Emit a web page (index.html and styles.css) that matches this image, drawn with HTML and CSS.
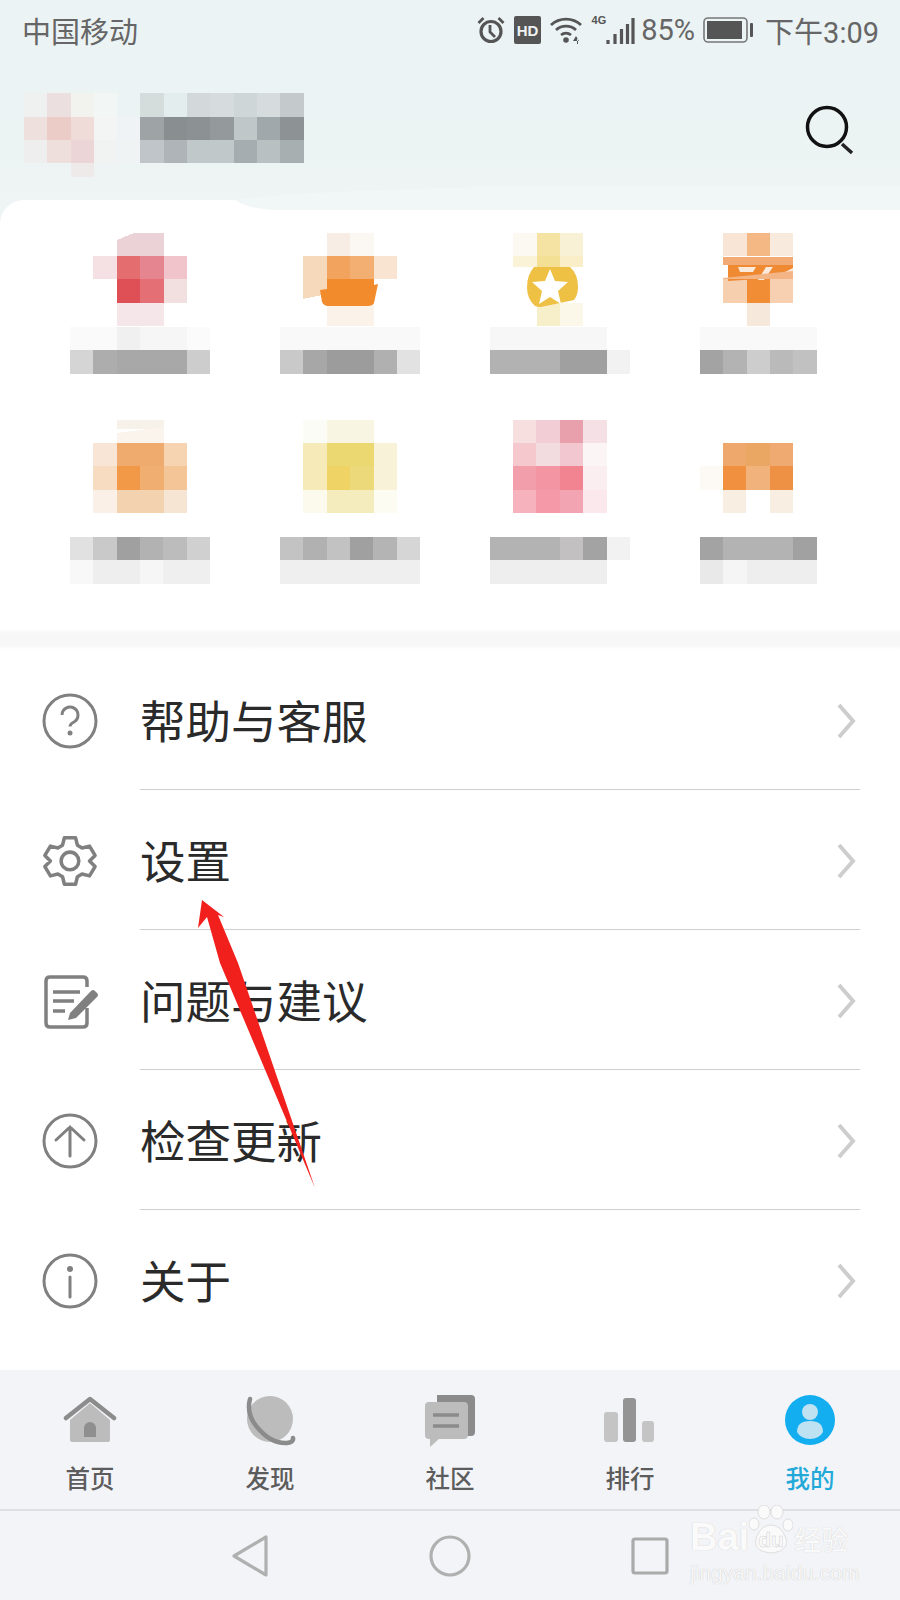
FILE: index.html
```html
<!DOCTYPE html>
<html lang="zh-CN">
<head>
<meta charset="utf-8">
<title>我的</title>
<link rel="stylesheet" href="styles.css">
</head>
<body>
<div class="phone">

  <div class="hero">
    <div class="status">
      <span class="carrier">中国移动</span>
      <div class="status-right">
        <svg class="ic-alarm" width="28" height="30" viewBox="0 0 28 30"><circle cx="14" cy="16.500" r="10" fill="none" stroke="#555" stroke-width="3.200"/><path d="M13 10v7l5 5" fill="none" stroke="#555" stroke-width="2.800"/><path d="M1.500 8l5-5M26.500 8l-5-5" stroke="#555" stroke-width="2.800"/></svg>
        <svg class="ic-hd" width="27" height="28" viewBox="0 0 27 28"><rect width="27" height="28" rx="2" fill="#555"/><text x="13.500" y="19.500" text-anchor="middle" class="hd-text">HD</text></svg>
        <svg class="ic-wifi" width="33" height="28" viewBox="0 0 33 28"><path d="M1 9a22 22 0 0 1 30 0M6 14a15 15 0 0 1 20 0M11 19a8 8 0 0 1 10 0" fill="none" stroke="#555" stroke-width="2.800"/><circle cx="16" cy="24" r="2.800" fill="#555"/><path d="M26 20l-3 5h6zM27 22h1v6h-1z" fill="#555"/></svg>
        <div class="signal">
          <span class="net">4G</span>
          <svg width="29" height="28" viewBox="0 0 29 28"><path d="M2 23v4M9 17v10M15.500 12v15M21.500 7v20M27 1v26" stroke="#555" stroke-width="3.200"/></svg>
        </div>
        <span class="pct">85%</span>
        <svg class="ic-batt" width="50" height="26" viewBox="0 0 50 26"><rect x="1" y="1" width="43" height="24" rx="4" fill="none" stroke="#777" stroke-width="1.600"/><rect x="4" y="4" width="35" height="18" fill="#555"/><rect x="47" y="6" width="3" height="14" rx="1" fill="#555"/></svg>
        <span class="clock">下午3:09</span>
      </div>
    </div>
    <div class="head-row">
      <svg class="head-mosaic" width="282" height="84" viewBox="0 0 282 84" shape-rendering="crispEdges">
        <rect x="0" y="0" width="23" height="24" fill="#eef1f0"/><rect x="23" y="0" width="24" height="24" fill="#ecdfdf"/><rect x="47" y="0" width="23" height="24" fill="#f2f2ef"/><rect x="70" y="0" width="23" height="24" fill="#f2f6f5"/>
        <rect x="0" y="24" width="23" height="23" fill="#eee0dd"/><rect x="23" y="24" width="24" height="23" fill="#ecccc7"/><rect x="47" y="24" width="23" height="23" fill="#efdcd9"/><rect x="70" y="24" width="23" height="23" fill="#f2f5f4"/><rect x="93" y="24" width="23" height="23" fill="#f0f3f5"/>
        <rect x="0" y="47" width="23" height="23" fill="#edeeed"/><rect x="23" y="47" width="24" height="23" fill="#eedfdd"/><rect x="47" y="47" width="23" height="23" fill="#ecd5d7"/><rect x="70" y="47" width="23" height="23" fill="#f0f3f1"/><rect x="93" y="47" width="23" height="23" fill="#eff3f4"/>
        <rect x="47" y="70" width="23" height="14" fill="#eeeaea"/>
        <rect x="116" y="0" width="24" height="24" fill="#d4dcdc"/><rect x="140" y="0" width="23" height="24" fill="#e4eded"/><rect x="163" y="0" width="23" height="24" fill="#d3d9da"/><rect x="186" y="0" width="24" height="24" fill="#d6dcdd"/><rect x="210" y="0" width="23" height="24" fill="#cfd6d7"/><rect x="233" y="0" width="23" height="24" fill="#d6dcdd"/><rect x="256" y="0" width="24" height="24" fill="#c4cacb"/>
        <rect x="116" y="24" width="24" height="23" fill="#9ea4a6"/><rect x="140" y="24" width="23" height="23" fill="#898e91"/><rect x="163" y="24" width="23" height="23" fill="#8c9194"/><rect x="186" y="24" width="24" height="23" fill="#94999b"/><rect x="210" y="24" width="23" height="23" fill="#c0c7c9"/><rect x="233" y="24" width="23" height="23" fill="#a1a8ab"/><rect x="256" y="24" width="24" height="23" fill="#8d9295"/>
        <rect x="116" y="47" width="24" height="23" fill="#bfc5c8"/><rect x="140" y="47" width="23" height="23" fill="#aeb4b7"/><rect x="163" y="47" width="23" height="23" fill="#c1c8ca"/><rect x="186" y="47" width="24" height="23" fill="#c1c8ca"/><rect x="210" y="47" width="23" height="23" fill="#a5adb0"/><rect x="233" y="47" width="23" height="23" fill="#b9c0c2"/><rect x="256" y="47" width="24" height="23" fill="#a8afb1"/>
      </svg>
      <svg class="ic-search" width="50" height="50" viewBox="0 0 50 50"><circle cx="22" cy="22" r="19.500" fill="none" stroke="#111" stroke-width="3.500"/><path d="M37 39l10 9" stroke="#222" stroke-width="3.500"/></svg>
    </div>
  </div>

  <div class="apps">
    <svg class="mosaic" viewBox="0 0 140 94" shape-rendering="crispEdges">
      <path d="M47 7l17-7h30v23H47z" fill="#ebd2d6"/>
      <rect x="23" y="23" width="24" height="23" fill="#f5e0e3"/><rect x="47" y="23" width="23" height="23" fill="#e46d70"/><rect x="70" y="23" width="24" height="23" fill="#e5858f"/><rect x="94" y="23" width="23" height="23" fill="#f0c4ca"/>
      <rect x="47" y="46" width="23" height="24" fill="#de5055"/><rect x="70" y="46" width="24" height="24" fill="#e46f74"/><rect x="94" y="46" width="23" height="24" fill="#f2dfe0"/>
      <rect x="47" y="70" width="47" height="23" fill="#f5e7e9"/>
    </svg>
    <svg class="mosaic" viewBox="0 0 140 94" shape-rendering="crispEdges">
      <rect x="47" y="0" width="23" height="23" fill="#f8ede4"/><rect x="70" y="0" width="24" height="23" fill="#fbf8f3"/>
      <path d="M23 23h24v38l-24 5z" fill="#f6d8bb"/><rect x="47" y="23" width="23" height="23" fill="#f2a45f"/><rect x="70" y="23" width="24" height="23" fill="#f3ae72"/><rect x="94" y="23" width="23" height="23" fill="#f8e4d0"/>
      <rect x="47" y="73" width="47" height="20" fill="#fbf3e9"/>
      <path d="M47 46H94V52l4-1-4 19q-1 3-6 3H48q-4 0-6-4L40 57l7-1z" fill="#f18b2c" shape-rendering="auto"/>
    </svg>
    <svg class="mosaic" viewBox="0 0 140 94" shape-rendering="crispEdges">
      <rect x="23" y="0" width="24" height="23" fill="#fbf9f2"/><rect x="47" y="0" width="23" height="23" fill="#f5e3a4"/><rect x="70" y="0" width="23" height="23" fill="#f9f1d6"/>
      <rect x="23" y="23" width="24" height="11" fill="#fbf3d8"/><rect x="47" y="23" width="23" height="11" fill="#f3e095"/><rect x="70" y="23" width="23" height="11" fill="#f9eec8"/>
      <rect x="47" y="70" width="23" height="23" fill="#f7efc9"/><rect x="70" y="70" width="23" height="23" fill="#fbf8ea"/>
      <g shape-rendering="auto">
        <path d="M44 34h36q8 7 8 20 0 8-4 13l-33 7q-4 0-6-1Q37 66 37 54q0-12 7-20z" fill="#eec044"/>
        <path d="M60 36l5 12 13 1-10 9 3 13-11-7-11 7 3-13-10-9 13-1z" fill="#fff"/>
      </g>
    </svg>
    <svg class="mosaic" viewBox="0 0 140 94" shape-rendering="crispEdges">
      <rect x="23" y="0" width="24" height="23" fill="#f8e5d5"/><rect x="47" y="0" width="23" height="23" fill="#f3b883"/><rect x="70" y="0" width="23" height="23" fill="#f8ebdd"/>
      <rect x="23" y="24" width="70" height="8" fill="#f2ab74"/>
      <rect x="23" y="46" width="24" height="24" fill="#f6cfaf"/><rect x="47" y="46" width="23" height="24" fill="#f18d34"/><rect x="70" y="46" width="23" height="24" fill="#f6d0b0"/>
      <rect x="47" y="70" width="23" height="23" fill="#f6e8da"/>
      <g shape-rendering="auto">
        <path d="M28 32h65v12l-65 4z" fill="#f08a32"/>
        <path d="M38 34h18l-3 5H40zM66 34h7l-9 13h-6zM85 39l8-4v5z" fill="#fbeadb"/>
        <path d="M23 46v-1l70-7v8z" fill="#f3b486"/>
      </g>
    </svg>

    <svg class="lines" viewBox="0 0 140 70" shape-rendering="crispEdges">
      <rect x="0" y="0" width="47" height="23" fill="#fafafa"/><rect x="47" y="0" width="23" height="23" fill="#f0f0f0"/><rect x="70" y="0" width="47" height="23" fill="#f6f6f6"/><rect x="117" y="0" width="23" height="23" fill="#fbfbfb"/>
      <rect x="0" y="23" width="23" height="24" fill="#d5d5d5"/><rect x="23" y="23" width="24" height="24" fill="#adadad"/><rect x="47" y="23" width="70" height="24" fill="#a8a8a8"/><rect x="117" y="23" width="23" height="24" fill="#cdcdcd"/>
    </svg>
    <svg class="lines" viewBox="0 0 140 70" shape-rendering="crispEdges">
      <rect x="0" y="0" width="140" height="23" fill="#f9f9f9"/>
      <rect x="0" y="23" width="23" height="24" fill="#c9c9c9"/><rect x="23" y="23" width="24" height="24" fill="#a7a7a7"/><rect x="47" y="23" width="47" height="24" fill="#9c9c9c"/><rect x="94" y="23" width="23" height="24" fill="#b0b0b0"/><rect x="117" y="23" width="23" height="24" fill="#e2e2e2"/>
    </svg>
    <svg class="lines" viewBox="0 0 140 70" shape-rendering="crispEdges">
      <rect x="0" y="0" width="117" height="23" fill="#f7f7f7"/>
      <rect x="0" y="23" width="70" height="24" fill="#b2b2b2"/><rect x="70" y="23" width="47" height="24" fill="#a0a0a0"/><rect x="117" y="23" width="23" height="24" fill="#f2f2f2"/>
    </svg>
    <svg class="lines" viewBox="0 0 140 70" shape-rendering="crispEdges">
      <rect x="0" y="0" width="117" height="23" fill="#f9f9f9"/>
      <rect x="0" y="23" width="23" height="24" fill="#a3a3a3"/><rect x="23" y="23" width="24" height="24" fill="#b3b3b3"/><rect x="47" y="23" width="23" height="24" fill="#cdcdcd"/><rect x="70" y="23" width="23" height="24" fill="#bababa"/><rect x="93" y="23" width="24" height="24" fill="#c1c1c1"/>
    </svg>

    <svg class="mosaic" viewBox="0 0 140 94" shape-rendering="crispEdges">
      <rect x="47" y="0" width="47" height="9" fill="#f6f2ea"/><path d="M47 13l47-6v16H47z" fill="#fbf4ec"/>
      <rect x="23" y="23" width="24" height="23" fill="#f8e5d6"/><rect x="47" y="23" width="47" height="23" fill="#eeab6d"/><rect x="94" y="23" width="23" height="23" fill="#f6d4b2"/>
      <rect x="23" y="46" width="24" height="24" fill="#f7dcc2"/><rect x="47" y="46" width="23" height="24" fill="#f29947"/><rect x="70" y="46" width="24" height="24" fill="#f0ae70"/><rect x="94" y="46" width="23" height="24" fill="#f3c597"/>
      <rect x="23" y="70" width="24" height="23" fill="#faf0e7"/><rect x="47" y="70" width="47" height="23" fill="#f3d2b0"/><rect x="94" y="70" width="23" height="23" fill="#f6e5d3"/>
    </svg>
    <svg class="mosaic" viewBox="0 0 140 94" shape-rendering="crispEdges">
      <rect x="23" y="0" width="24" height="23" fill="#fcfcf6"/><rect x="47" y="0" width="47" height="23" fill="#f8f6e2"/>
      <rect x="23" y="23" width="24" height="47" fill="#f5eab8"/><rect x="47" y="23" width="47" height="23" fill="#ecd871"/><rect x="94" y="23" width="23" height="47" fill="#f8f3d8"/>
      <rect x="47" y="46" width="23" height="24" fill="#f0d365"/><rect x="70" y="46" width="24" height="24" fill="#ecda7a"/>
      <rect x="23" y="70" width="24" height="23" fill="#fbfaed"/><rect x="47" y="70" width="47" height="23" fill="#f5ecbe"/><rect x="94" y="70" width="23" height="23" fill="#fdfcf3"/>
    </svg>
    <svg class="mosaic" viewBox="0 0 140 94" shape-rendering="crispEdges">
      <rect x="23" y="0" width="23" height="23" fill="#f7dfe0"/><rect x="46" y="0" width="24" height="23" fill="#f2cdd6"/><rect x="70" y="0" width="23" height="23" fill="#e7a0ac"/><rect x="93" y="0" width="24" height="23" fill="#f5e0e6"/>
      <rect x="23" y="23" width="23" height="23" fill="#f5c8ce"/><rect x="46" y="23" width="24" height="23" fill="#f3dce0"/><rect x="70" y="23" width="23" height="23" fill="#f2c7d0"/><rect x="93" y="23" width="24" height="23" fill="#fcf5f5"/>
      <rect x="23" y="46" width="23" height="24" fill="#f29fab"/><rect x="46" y="46" width="24" height="24" fill="#f495a3"/><rect x="70" y="46" width="23" height="24" fill="#f28390"/><rect x="93" y="46" width="24" height="24" fill="#fbeef0"/>
      <rect x="23" y="70" width="23" height="23" fill="#f6b3be"/><rect x="46" y="70" width="24" height="23" fill="#f598a7"/><rect x="70" y="70" width="23" height="23" fill="#f3a4b2"/><rect x="93" y="70" width="24" height="23" fill="#fae8ec"/>
    </svg>
    <svg class="mosaic" viewBox="0 0 140 94" shape-rendering="crispEdges">
      <rect x="23" y="23" width="23" height="23" fill="#eea86c"/><rect x="46" y="23" width="24" height="23" fill="#eaa663"/><rect x="70" y="23" width="23" height="23" fill="#eeaa70"/>
      <rect x="0" y="46" width="23" height="24" fill="#fdfaf6"/><rect x="23" y="46" width="23" height="24" fill="#f19140"/><rect x="46" y="46" width="24" height="24" fill="#f2b27c"/><rect x="70" y="46" width="23" height="24" fill="#ef9145"/>
      <rect x="23" y="70" width="23" height="23" fill="#f9eee2"/><rect x="70" y="70" width="23" height="23" fill="#f9eee2"/>
    </svg>

    <svg class="lines" viewBox="0 -23 140 70" shape-rendering="crispEdges">
      <rect x="0" y="0" width="23" height="23" fill="#e1e1e1"/><rect x="23" y="0" width="24" height="23" fill="#c9c9c9"/><rect x="47" y="0" width="23" height="23" fill="#a0a0a0"/><rect x="70" y="0" width="23" height="23" fill="#b2b2b2"/><rect x="93" y="0" width="24" height="23" fill="#bcbcbc"/><rect x="117" y="0" width="23" height="23" fill="#d0d0d0"/>
      <rect x="0" y="23" width="23" height="24" fill="#f8f8f8"/><rect x="23" y="23" width="47" height="24" fill="#eeeeee"/><rect x="70" y="23" width="23" height="24" fill="#f6f6f6"/><rect x="93" y="23" width="47" height="24" fill="#efefef"/>
    </svg>
    <svg class="lines" viewBox="0 -23 140 70" shape-rendering="crispEdges">
      <rect x="0" y="0" width="23" height="23" fill="#c3c3c3"/><rect x="23" y="0" width="24" height="23" fill="#b1b1b1"/><rect x="47" y="0" width="23" height="23" fill="#c2c2c2"/><rect x="70" y="0" width="23" height="23" fill="#a0a0a0"/><rect x="93" y="0" width="24" height="23" fill="#b4b4b4"/><rect x="117" y="0" width="23" height="23" fill="#d6d6d6"/>
      <rect x="0" y="23" width="140" height="24" fill="#efefef"/>
    </svg>
    <svg class="lines" viewBox="0 -23 140 70" shape-rendering="crispEdges">
      <rect x="0" y="0" width="70" height="23" fill="#b3b3b3"/><rect x="70" y="0" width="23" height="23" fill="#c2c0c1"/><rect x="93" y="0" width="24" height="23" fill="#a3a3a3"/><rect x="117" y="0" width="23" height="23" fill="#f2f2f2"/>
      <rect x="0" y="23" width="117" height="24" fill="#eeeeee"/>
    </svg>
    <svg class="lines" viewBox="0 -23 140 70" shape-rendering="crispEdges">
      <rect x="0" y="0" width="23" height="23" fill="#a3a3a3"/><rect x="23" y="0" width="70" height="23" fill="#b3b3b3"/><rect x="93" y="0" width="24" height="23" fill="#a1a1a1"/>
      <rect x="0" y="23" width="23" height="24" fill="#e9e9e9"/><rect x="23" y="23" width="24" height="24" fill="#f5f5f5"/><rect x="47" y="23" width="70" height="24" fill="#eeeeee"/>
    </svg>
  </div>

  <div class="band"></div>

  <ul class="menu">
    <li class="row">
      <svg class="row-ic" width="58" height="58" viewBox="0 0 58 58"><circle cx="29" cy="29" r="26" fill="none" stroke="#808080" stroke-width="3"/><path d="M21 23a8 8 0 1 1 12 7q-4 2-4 4.500" fill="none" stroke="#808080" stroke-width="3"/><circle cx="29" cy="41" r="2.500" fill="#808080"/></svg>
      <span class="row-label">帮助与客服</span>
      <svg class="chev" width="20" height="38" viewBox="0 0 20 38"><path d="M3 3l14 16L3 35" fill="none" stroke="#cdcdcd" stroke-width="4"/></svg>
    </li>
    <li class="row">
      <svg class="row-ic" width="58" height="58" viewBox="0 0 58 58"><g transform="translate(2 2) scale(.93)"><path d="M23 4h12l2 8 5 3 8-2 6 10-6 6 6 6-6 10-8-2-5 3-2 8H23l-2-8-5-3-8 2-6-10 6-6-6-6 6-10 8 2 5-3z" fill="none" stroke="#808080" stroke-width="3.800" stroke-linejoin="round"/><circle cx="29" cy="29" r="9.500" fill="none" stroke="#808080" stroke-width="3.800"/></g></svg>
      <span class="row-label">设置</span>
      <svg class="chev" width="20" height="38" viewBox="0 0 20 38"><path d="M3 3l14 16L3 35" fill="none" stroke="#cdcdcd" stroke-width="4"/></svg>
    </li>
    <li class="row">
      <svg class="row-ic" width="58" height="58" viewBox="0 0 58 58"><path d="M46 15V9q0-4-4-4H9Q5 5 5 9v42q0 4 4 4h33q4 0 4-4V36" fill="none" stroke="#808080" stroke-width="3.500"/><path d="M12 20h27M12 29h21M12 39h12" stroke="#808080" stroke-width="3.500"/><path d="M27 48l2-7 21-22q2-2 4 0l2 2q2 2 0 4L35 46z" fill="#808080"/></svg>
      <span class="row-label">问题与建议</span>
      <svg class="chev" width="20" height="38" viewBox="0 0 20 38"><path d="M3 3l14 16L3 35" fill="none" stroke="#cdcdcd" stroke-width="4"/></svg>
    </li>
    <li class="row">
      <svg class="row-ic" width="58" height="58" viewBox="0 0 58 58"><circle cx="29" cy="29" r="26" fill="none" stroke="#808080" stroke-width="3"/><path d="M29 44V15M15 28l14-13 14 13" fill="none" stroke="#808080" stroke-width="3" stroke-linecap="round"/></svg>
      <span class="row-label">检查更新</span>
      <svg class="chev" width="20" height="38" viewBox="0 0 20 38"><path d="M3 3l14 16L3 35" fill="none" stroke="#cdcdcd" stroke-width="4"/></svg>
    </li>
    <li class="row">
      <svg class="row-ic" width="58" height="58" viewBox="0 0 58 58"><circle cx="29" cy="29" r="26" fill="none" stroke="#808080" stroke-width="3"/><circle cx="29" cy="17" r="3" fill="#808080"/><path d="M29 25v20" stroke="#808080" stroke-width="3" stroke-linecap="round"/></svg>
      <span class="row-label">关于</span>
      <svg class="chev" width="20" height="38" viewBox="0 0 20 38"><path d="M3 3l14 16L3 35" fill="none" stroke="#cdcdcd" stroke-width="4"/></svg>
    </li>
  </ul>

  <div class="tabs">
    <div class="tab">
      <svg width="54" height="54" viewBox="0 0 54 54"><path d="M27 9l20 17v20q0 2-2 2H9q-2 0-2-2V26z" fill="#bcbcbc"/><path d="M3 24L27 5l24 19" fill="none" stroke="#8c8c8c" stroke-width="4.500" stroke-linecap="round" stroke-linejoin="round"/><path d="M21 43V34a6 6 0 0 1 12 0v9z" fill="#8f8f8f"/></svg>
      <span>首页</span>
    </div>
    <div class="tab">
      <svg width="54" height="54" viewBox="0 0 54 54"><circle cx="27" cy="25" r="23" fill="#bcbcbc"/><path d="M7 5Q3 20 14 33 28 50 44 49q7-1 6-5" fill="none" stroke="#8b8b8b" stroke-width="4.500" stroke-linecap="round"/></svg>
      <span>发现</span>
    </div>
    <div class="tab">
      <svg width="54" height="54" viewBox="0 0 54 54"><path d="M14 1h34q4 0 4 4v33q0 4-4 4H14z" fill="#8b8b8b"/><path d="M6 8h35q4 0 4 4v29q0 4-4 4H16L7 53v-8H6q-4 0-4-4V12q0-4 4-4z" fill="#bcbcbc"/><path d="M10 21h26M10 32h26" stroke="#8b8b8b" stroke-width="3.600"/></svg>
      <span>社区</span>
    </div>
    <div class="tab">
      <svg width="54" height="54" viewBox="0 0 54 54"><rect x="1" y="18" width="14" height="30" rx="3" fill="#c4c4c4"/><rect x="20" y="4" width="13" height="44" rx="3" fill="#949494"/><rect x="39" y="27" width="12" height="21" rx="3" fill="#c4c4c4"/></svg>
      <span>排行</span>
    </div>
    <div class="tab on">
      <svg width="54" height="54" viewBox="0 0 54 54"><circle cx="27" cy="26" r="25" fill="#12aef0"/><circle cx="27" cy="18" r="8" fill="#bfe2f3"/><path d="M14 38q0-11 13-11t13 11q-4 7-13 7t-13-7z" fill="#bfe2f3"/></svg>
      <span>我的</span>
    </div>
  </div>

  <div class="nav">
    <div class="nav-btn"><svg width="38" height="44" viewBox="0 0 38 44"><path d="M35 3v38L3 22z" fill="none" stroke="#b0b0b0" stroke-width="3.200" stroke-linejoin="round"/></svg></div>
    <div class="nav-btn"><svg width="42" height="42" viewBox="0 0 42 42"><circle cx="21" cy="21" r="19" fill="none" stroke="#b0b0b0" stroke-width="3.200"/></svg></div>
    <div class="nav-btn"><svg width="38" height="38" viewBox="0 0 38 38"><rect x="2" y="2" width="34" height="34" rx="2" fill="none" stroke="#aaa" stroke-width="3.200"/></svg></div>
  </div>

  <!-- things that sit on top of the screenshot -->
  <svg class="swoosh" width="900" height="30" viewBox="0 0 900 30"><path d="M235 20Q330 9 520 7H900V30H280Q250 30 235 20z" fill="#f1f7f6"/></svg>
  <svg class="arrow" width="122" height="306" viewBox="0 0 122 306"><path d="M6 14l22 17-6-2 20 48 77 225L24 77 11 31l-9 11z" fill="#f1201c"/></svg>
  <div class="mark">
    <div class="mark-top">
      <span class="mark-bai">Bai</span>
      <svg class="paw" width="44" height="52" viewBox="0 0 44 52"><g fill="#fafafa" stroke="#dedede"><ellipse cx="15" cy="7" rx="6" ry="7"/><ellipse cx="28" cy="7" rx="6" ry="7"/><ellipse cx="5" cy="19" rx="5" ry="6"/><ellipse cx="39" cy="20" rx="5" ry="6"/><path d="M22 20q9 0 14 11 6 15-14 17Q2 46 8 31q5-11 14-11z"/></g><text x="22" y="42" text-anchor="middle" class="mark-du">du</text></svg>
      <span class="mark-cn">经验</span>
    </div>
    <div class="mark-url">jingyan.baidu.com</div>
  </div>
</div>
</body>
</html>
```

FILE: styles.css
```css
* { box-sizing: border-box; }
html, body { margin: 0; padding: 0; }
body { background: #fff; font-family: "Noto Sans CJK SC", "Liberation Sans", sans-serif; }

.phone { position: relative; width: 900px; height: 1600px; overflow: hidden; background: #fff; }

.hero { height: 225px; padding: 0 22px; background: linear-gradient(180deg, #ebf3f4 0%, #ecf3f3 60%, #eff5f4 100%); }

.status { display: flex; justify-content: space-between; align-items: center; height: 64px; padding-bottom: 4px; color: #666; }
.carrier { font-size: 29px; line-height: 60px; }
.status-right { display: flex; align-items: center; margin-right: -1px; font-family: Roboto, "Noto Sans CJK SC", sans-serif; }
.ic-hd { margin-left: 9px; }
.hd-text { font: bold 15px "Liberation Sans", sans-serif; fill: #eef2f3; }
.ic-wifi { margin-left: 9px; }
.signal { display: flex; align-items: flex-end; margin-left: 9px; height: 30px; }
.net { font: bold 11px/12px "Liberation Sans", sans-serif; color: #555; align-self: flex-start; margin-top: -1px; }
.pct { font-size: 29px; margin-left: 6px; color: #666; }
.ic-batt { margin-left: 8px; }
.clock { font-size: 29px; margin-left: 12px; color: #666; }

.head-row { display: flex; justify-content: space-between; align-items: flex-start; padding-top: 29px; }
.head-mosaic { display: block; margin-left: 2px; }
.ic-search { margin: 12px 23px 0 0; }

.apps {
  display: grid;
  grid-template-columns: repeat(4, 140px);
  grid-template-rows: 94px 93px 94px 70px;
  column-gap: 70px;
  padding: 33px 0 0 70px;
  height: 430px;
  margin-top: -25px;
  background: #fff;
  border-radius: 24px 0 0 0;
  position: relative;
}
.mosaic { display: block; width: 140px; height: 94px; }
.lines { display: block; width: 140px; height: 70px; }

.band { height: 19px; background: linear-gradient(180deg, #fdfcfc, #f8f7f7 20%, #f8f7f7 80%, #fefefe); }

.menu { list-style: none; margin: 0; padding: 0; height: 721px; }
.row { display: flex; align-items: center; height: 140px; padding: 4px 44px 0 41px; position: relative; }
.row-ic { flex: none; }
.row-label { flex: 1; margin-left: 41px; padding-bottom: 4px; font-size: 45.500px; line-height: 60px; color: #2a2a2a; }
.chev { flex: none; }
.row + .row::before { content: ""; position: absolute; left: 140px; right: 40px; top: 0; height: 1px; background: #cfcfcf; }

.tabs { display: grid; grid-template-columns: repeat(5, 1fr); height: 141px; background: #f3f4f8; border-bottom: 2px solid #dedfe2; }
.tab { display: flex; flex-direction: column; align-items: center; padding-top: 24px; color: #5c5c5c; font-size: 24.500px; font-weight: 500; line-height: 34px; }
.tab svg { display: block; }
.tab span { margin-top: 13px; }
.tab.on { color: #23a9d8; }

.nav { display: flex; justify-content: center; align-items: center; height: 89px; background: #f3f4f7; }
.nav-btn { display: flex; justify-content: center; width: 200px; }

.swoosh { position: absolute; left: 0; top: 180px; }
.arrow { position: absolute; left: 196px; top: 886px; }

.mark { position: absolute; left: 690px; top: 1505px; width: 165px; }
.mark-top { display: flex; align-items: flex-end; height: 52px; }
.mark-bai { font: bold 38px/40px "Liberation Sans", sans-serif; color: #fafafa; text-shadow: 0 0 1px #c4c4c4; }
.paw { display: block; flex: none; }
.mark-du { font: bold 21px "Liberation Sans", sans-serif; fill: #fafafa; stroke: #d0d0d0; stroke-width: .5px; }
.mark-cn { font-size: 27px; line-height: 36px; margin-left: 1px; color: #fafafa; text-shadow: 0 0 1px #c4c4c4; }
.mark-url { font: 21px/24px "Liberation Sans", sans-serif; color: #f7f7f7; text-shadow: 0 0 1px #bdbdbd; margin-top: 4px; white-space: nowrap; }
```
